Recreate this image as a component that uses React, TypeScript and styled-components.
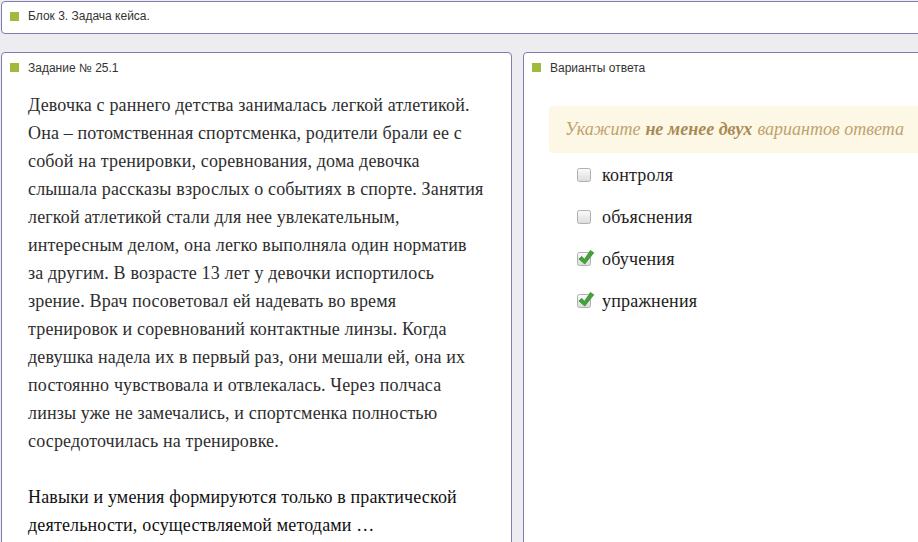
import React from "react";
import styled, { createGlobalStyle } from "styled-components";

const GlobalStyle = createGlobalStyle`
  html, body {
    margin: 0;
    padding: 0;
    background: #ededf1;
    overflow: hidden;
  }
`;

type Option = { label: string; checked: boolean };

const options: Option[] = [
  { label: "контроля", checked: false },
  { label: "объяснения", checked: false },
  { label: "обучения", checked: true },
  { label: "упражнения", checked: true },
];

const caseText =
  "Девочка с раннего детства занималась легкой атлетикой. Она – потомственная спортсменка, родители брали ее с собой на тренировки, соревнования, дома девочка слышала рассказы взрослых о событиях в спорте. Занятия легкой атлетикой стали для нее увлекательным, интересным делом, она легко выполняла один норматив за другим. В возрасте 13 лет у девочки испортилось зрение. Врач посоветовал ей надевать во время тренировок и соревнований контактные линзы. Когда девушка надела их в первый раз, они мешали ей, она их постоянно чувствовала и отвлекалась. Через полчаса линзы уже не замечались, и спортсменка полностью сосредоточилась на тренировке.";

function CheckBox({ checked }: { checked: boolean }) {
  return (
    <BoxIcon width="18" height="18" viewBox="0 0 18 18">
      <defs>
        <linearGradient id="boxFill" x1="0" y1="0" x2="0" y2="1">
          <stop offset="0" stopColor="#fbfbfb" />
          <stop offset="1" stopColor="#dcdcdc" />
        </linearGradient>
      </defs>
      <rect
        x="0.5"
        y="4.5"
        width="13"
        height="13"
        rx="2"
        fill="url(#boxFill)"
        stroke="#b0b0b0"
      />
      {checked && (
        <path
          d="M1.8 11 L4.8 8.4 L7.4 11.4 L13.4 2.4 L16.8 4.8 L7.8 16 Z"
          fill="#45a238"
          stroke="#2e8a29"
          strokeWidth="0.7"
          strokeLinejoin="round"
        />
      )}
    </BoxIcon>
  );
}

export default function App() {
  return (
    <>
      <GlobalStyle />
      <Page>
        <TopBar>
          <Marker />
          <HeaderTitle>Блок 3. Задача кейса.</HeaderTitle>
        </TopBar>
        <Columns>
          <TaskPanel>
            <PanelHeader>
              <Marker />
              <HeaderTitle>Задание № 25.1</HeaderTitle>
            </PanelHeader>
            <TaskBody>
              <Paragraph $muted>{caseText}</Paragraph>
              <Paragraph>
                Навыки и умения формируются только в практической
                деятельности, осуществляемой методами …
              </Paragraph>
            </TaskBody>
          </TaskPanel>
          <AnswerPanel>
            <PanelHeader>
              <Marker />
              <HeaderTitle>Варианты ответа</HeaderTitle>
            </PanelHeader>
            <AnswerBody>
              <Hint>
                Укажите <b>не менее двух</b> вариантов ответа
              </Hint>
              <OptionList>
                {options.map((o) => (
                  <OptionRow key={o.label}>
                    <CheckBox checked={o.checked} />
                    <OptionLabel>{o.label}</OptionLabel>
                  </OptionRow>
                ))}
              </OptionList>
            </AnswerBody>
          </AnswerPanel>
        </Columns>
      </Page>
    </>
  );
}

const Page = styled.div`
  width: 980px;
  padding: 1px 0 0 1px;
`;

const TopBar = styled.div`
  height: 28px;
  display: flex;
  align-items: center;
  padding: 0 0 3px 8px;
  background: #ffffff;
  border: 1px solid #7d7daf;
  border-radius: 4px;
`;

const Marker = styled.span`
  width: 9px;
  height: 9px;
  background: #9fba3c;
  margin-right: 9px;
  flex-shrink: 0;
`;

const HeaderTitle = styled.span`
  font-family: "Liberation Sans", Arial, sans-serif;
  font-size: 12px;
  color: #333333;
`;

const Columns = styled.div`
  display: flex;
  gap: 11px;
  margin-top: 18px;
`;

const Panel = styled.div`
  background: #ffffff;
  border: 1px solid #7d7daf;
  border-radius: 4px;
  height: 560px;
`;

const TaskPanel = styled(Panel)`
  width: 509px;
`;

const AnswerPanel = styled(Panel)`
  flex: 1;
`;

const PanelHeader = styled.div`
  height: 29px;
  display: flex;
  align-items: center;
  padding: 0 0 2px 8px;
`;

const TaskBody = styled.div`
  padding: 7px 27px 0 26px;
`;

const Paragraph = styled.p<{ $muted?: boolean }>`
  margin: 0 0 28px;
  font-family: "Liberation Serif", "Times New Roman", serif;
  font-size: 18px;
  letter-spacing: 0.15px;
  line-height: 28px;
  color: ${(p) => (p.$muted ? "#2e2e2e" : "#111111")};
`;

const AnswerBody = styled.div`
  padding: 22px 0 0 25px;
`;

const Hint = styled.div`
  height: 47px;
  display: flex;
  align-items: center;
  padding-left: 16px;
  background: #fcf8e5;
  border-radius: 4px;
  font-family: "Liberation Serif", "Times New Roman", serif;
  font-style: italic;
  font-size: 18px;
  color: #bfa26e;
  white-space: nowrap;

  b {
    font-weight: bold;
    color: #a98a55;
    margin: 0 5px;
  }
`;

const OptionList = styled.div`
  display: flex;
  flex-direction: column;
  margin-top: 1px;
  padding-left: 28px;
`;

const OptionRow = styled.label`
  height: 42px;
  display: flex;
  align-items: center;
  gap: 7px;
`;

const BoxIcon = styled.svg`
  display: block;
  margin-top: -4px;
`;

const OptionLabel = styled.span`
  font-family: "Liberation Serif", "Times New Roman", serif;
  font-size: 18px;
  letter-spacing: 0.2px;
  color: #1c1c1c;
`;
